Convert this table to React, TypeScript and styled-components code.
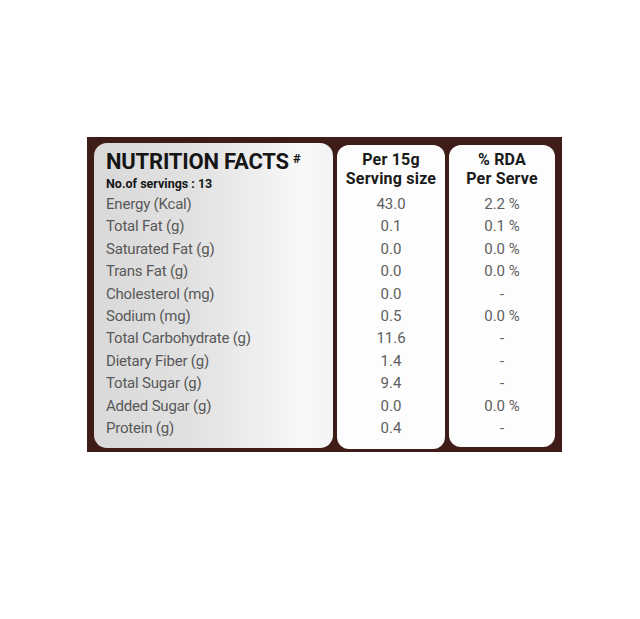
import React, { FC } from 'react'
import styled, { createGlobalStyle } from 'styled-components'

type Row = {
  label: string
  perServing: string
  rda: string
}

const rows: Row[] = [
  { label: 'Energy (Kcal)', perServing: '43.0', rda: '2.2 %' },
  { label: 'Total Fat (g)', perServing: '0.1', rda: '0.1 %' },
  { label: 'Saturated Fat (g)', perServing: '0.0', rda: '0.0 %' },
  { label: 'Trans Fat (g)', perServing: '0.0', rda: '0.0 %' },
  { label: 'Cholesterol (mg)', perServing: '0.0', rda: '-' },
  { label: 'Sodium (mg)', perServing: '0.5', rda: '0.0 %' },
  { label: 'Total Carbohydrate (g)', perServing: '11.6', rda: '-' },
  { label: 'Dietary Fiber (g)', perServing: '1.4', rda: '-' },
  { label: 'Total Sugar (g)', perServing: '9.4', rda: '-' },
  { label: 'Added Sugar (g)', perServing: '0.0', rda: '0.0 %' },
  { label: 'Protein (g)', perServing: '0.4', rda: '-' },
]

const App: FC = () => {
  return (
    <>
      <GlobalStyle />
      <Page>
        <Card>
          <LabelPanel>
            <TitleBlock>
              <Title>
                NUTRITION FACTS<Sup>#</Sup>
              </Title>
              <Servings>No.of servings : 13</Servings>
            </TitleBlock>
            {rows.map(row => (
              <LabelCell key={`label-${row.label}`}>{row.label}</LabelCell>
            ))}
          </LabelPanel>

          <ValuePanel $width={108} $top={2} $bottom={3}>
            <ColumnHead>
              Per 15g
              <br />
              Serving size
            </ColumnHead>
            {rows.map(row => (
              <ValueCell key={`serving-${row.label}`}>{row.perServing}</ValueCell>
            ))}
          </ValuePanel>

          <ValuePanel $width={106} $top={2} $bottom={5}>
            <ColumnHead>
              % RDA
              <br />
              Per Serve
            </ColumnHead>
            {rows.map(row => (
              <ValueCell key={`rda-${row.label}`}>{row.rda}</ValueCell>
            ))}
          </ValuePanel>
        </Card>
      </Page>
    </>
  )
}

export default App

const GlobalStyle = createGlobalStyle`
  html, body {
    margin: 0;
    padding: 0;
    background: #fff;
  }
  body {
    font-family: Roboto, "Liberation Sans", Arial, sans-serif;
  }
`
const Page = styled.div`
  width: 640px;
  height: 619px;
  padding: 137px 0 0 87px;
  box-sizing: border-box;
  background: #fff;
`
const Card = styled.div`
  display: flex;
  align-items: flex-start;
  gap: 4px;
  width: 475px;
  height: 315px;
  padding: 6px 7px 0;
  box-sizing: border-box;
  background: #3f1c17;
`
const LabelPanel = styled.div`
  display: flex;
  flex-direction: column;
  width: 239px;
  height: 305px;
  padding: 8px 0 0 12px;
  box-sizing: border-box;
  border-radius: 13px;
  background: linear-gradient(90deg, #d9d9d9 0%, #e1e1e1 40%, #eeeeee 68%, #f9f9f9 88%, #f3f3f3 100%);
`
const TitleBlock = styled.div`
  height: 42px;
  color: #161616;
`
const Title = styled.div`
  font-size: 22px;
  line-height: 22px;
  font-weight: 700;
  letter-spacing: -0.2px;
`
const Sup = styled.span`
  position: relative;
  top: -6px;
  margin-left: 4px;
  font-size: 13px;
`
const Servings = styled.div`
  margin-top: 1px;
  font-size: 12.5px;
  line-height: 13px;
  font-weight: 700;
`
const LabelCell = styled.div`
  height: 22.4px;
  font-size: 15px;
  line-height: 22.4px;
  letter-spacing: -0.2px;
  color: #585858;
  white-space: nowrap;
`
const ValuePanel = styled.div<{ $width: number; $top: number; $bottom: number }>`
  display: flex;
  flex-direction: column;
  align-items: center;
  width: ${p => p.$width}px;
  height: ${p => 309 - p.$top - p.$bottom}px;
  margin-top: ${p => p.$top}px;
  padding-top: 6px;
  box-sizing: border-box;
  border-radius: 12px;
  background: #fdfdfd;
`
const ColumnHead = styled.div`
  height: 42px;
  font-size: 16px;
  line-height: 18.5px;
  font-weight: 700;
  letter-spacing: 0.2px;
  text-align: center;
  color: #1a1a1a;
`
const ValueCell = styled.div`
  height: 22.4px;
  font-size: 15px;
  line-height: 22.4px;
  color: #5e5e5e;
  white-space: nowrap;
`
